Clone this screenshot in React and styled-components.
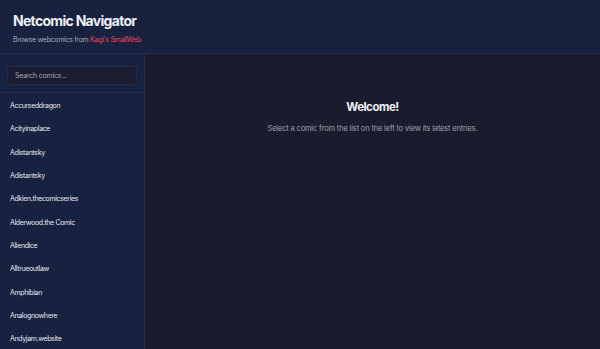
import React from 'react';
import styled, { createGlobalStyle } from 'styled-components';

const GlobalStyle = createGlobalStyle`
  html, body {
    margin: 0;
    padding: 0;
    height: 100%;
    background: #1b1b2e;
    font-family: Inter, "Noto Sans", sans-serif;
  }
  #root {
    height: 100%;
  }
`;

const Page = styled.div`
  height: 100vh;
  display: flex;
  flex-direction: column;
  overflow: hidden;
`;

const Header = styled.header`
  background: #18223f;
  border-bottom: 1px solid #222c4c;
  padding: 11px 13px 0;
  height: 42px;
  flex-shrink: 0;
`;

const Title = styled.h1`
  margin: 0;
  font-size: 14px;
  font-weight: 700;
  letter-spacing: -0.7px;
  color: #eef0f5;
  line-height: 19px;
`;

const Subtitle = styled.p`
  margin: 5px 0 0;
  font-size: 7px;
  letter-spacing: -0.3px;
  color: #a4a9bb;
  line-height: 10px;

  a {
    color: #e8445e;
    text-decoration: none;
  }
`;

const Body = styled.div`
  flex: 1;
  display: flex;
  min-height: 0;
`;

const Sidebar = styled.aside`
  width: 144px;
  background: #172140;
  border-right: 1px solid #222c4c;
  display: flex;
  flex-direction: column;
  flex-shrink: 0;
`;

const SearchWrap = styled.div`
  padding: 8px 7px 7px;
  border-bottom: 1px solid #222c4c;
`;

const Search = styled.input`
  box-sizing: border-box;
  width: 100%;
  height: 19px;
  padding: 0 7px;
  background: #1b1c31;
  border: 1px solid #252b47;
  border-radius: 3px;
  color: #e0e3ea;
  font-family: inherit;
  font-size: 7px;
  letter-spacing: -0.2px;
  outline: none;

  &::placeholder {
    color: #a0a5b6;
  }
`;

const List = styled.ul`
  list-style: none;
  margin: 0;
  padding: 1px 0 0;
  overflow: hidden;
`;

const Item = styled.li`
  height: 23.33px;
  line-height: 23.33px;
  padding-left: 10px;
  font-size: 7px;
  letter-spacing: -0.35px;
  color: #e4e6ee;
  white-space: nowrap;
`;

const Main = styled.main`
  flex: 1;
  background: #1b1b2e;
  display: flex;
  flex-direction: column;
  align-items: center;
  padding-top: 46px;
`;

const Welcome = styled.h2`
  margin: 0;
  font-size: 11.5px;
  font-weight: 700;
  letter-spacing: -0.5px;
  color: #eef0f5;
  line-height: 14px;
`;

const Hint = styled.p`
  margin: 10px 0 0;
  font-size: 7.5px;
  letter-spacing: -0.17px;
  color: #9ea3b4;
  line-height: 10px;
`;

const comics = [
  'Accurseddragon',
  'Acityinaplace',
  'Adistantsky',
  'Adistantsky',
  'Adkien.thecomicseries',
  'Alderwood.the Comic',
  'Aliendice',
  'Alltrueoutlaw',
  'Amphibian',
  'Analognowhere',
  'Andyjam.website',
];

const App = () => (
  <Page>
    <GlobalStyle />
    <Header>
      <Title>Netcomic Navigator</Title>
      <Subtitle>
        Browse webcomics from <a href="#">Kagi's SmallWeb</a>
      </Subtitle>
    </Header>
    <Body>
      <Sidebar>
        <SearchWrap>
          <Search placeholder="Search comics..." />
        </SearchWrap>
        <List>
          {comics.map((name, i) => (
            <Item key={i}>{name}</Item>
          ))}
        </List>
      </Sidebar>
      <Main>
        <Welcome>Welcome!</Welcome>
        <Hint>Select a comic from the list on the left to view its latest entries.</Hint>
      </Main>
    </Body>
  </Page>
);

export default App;
